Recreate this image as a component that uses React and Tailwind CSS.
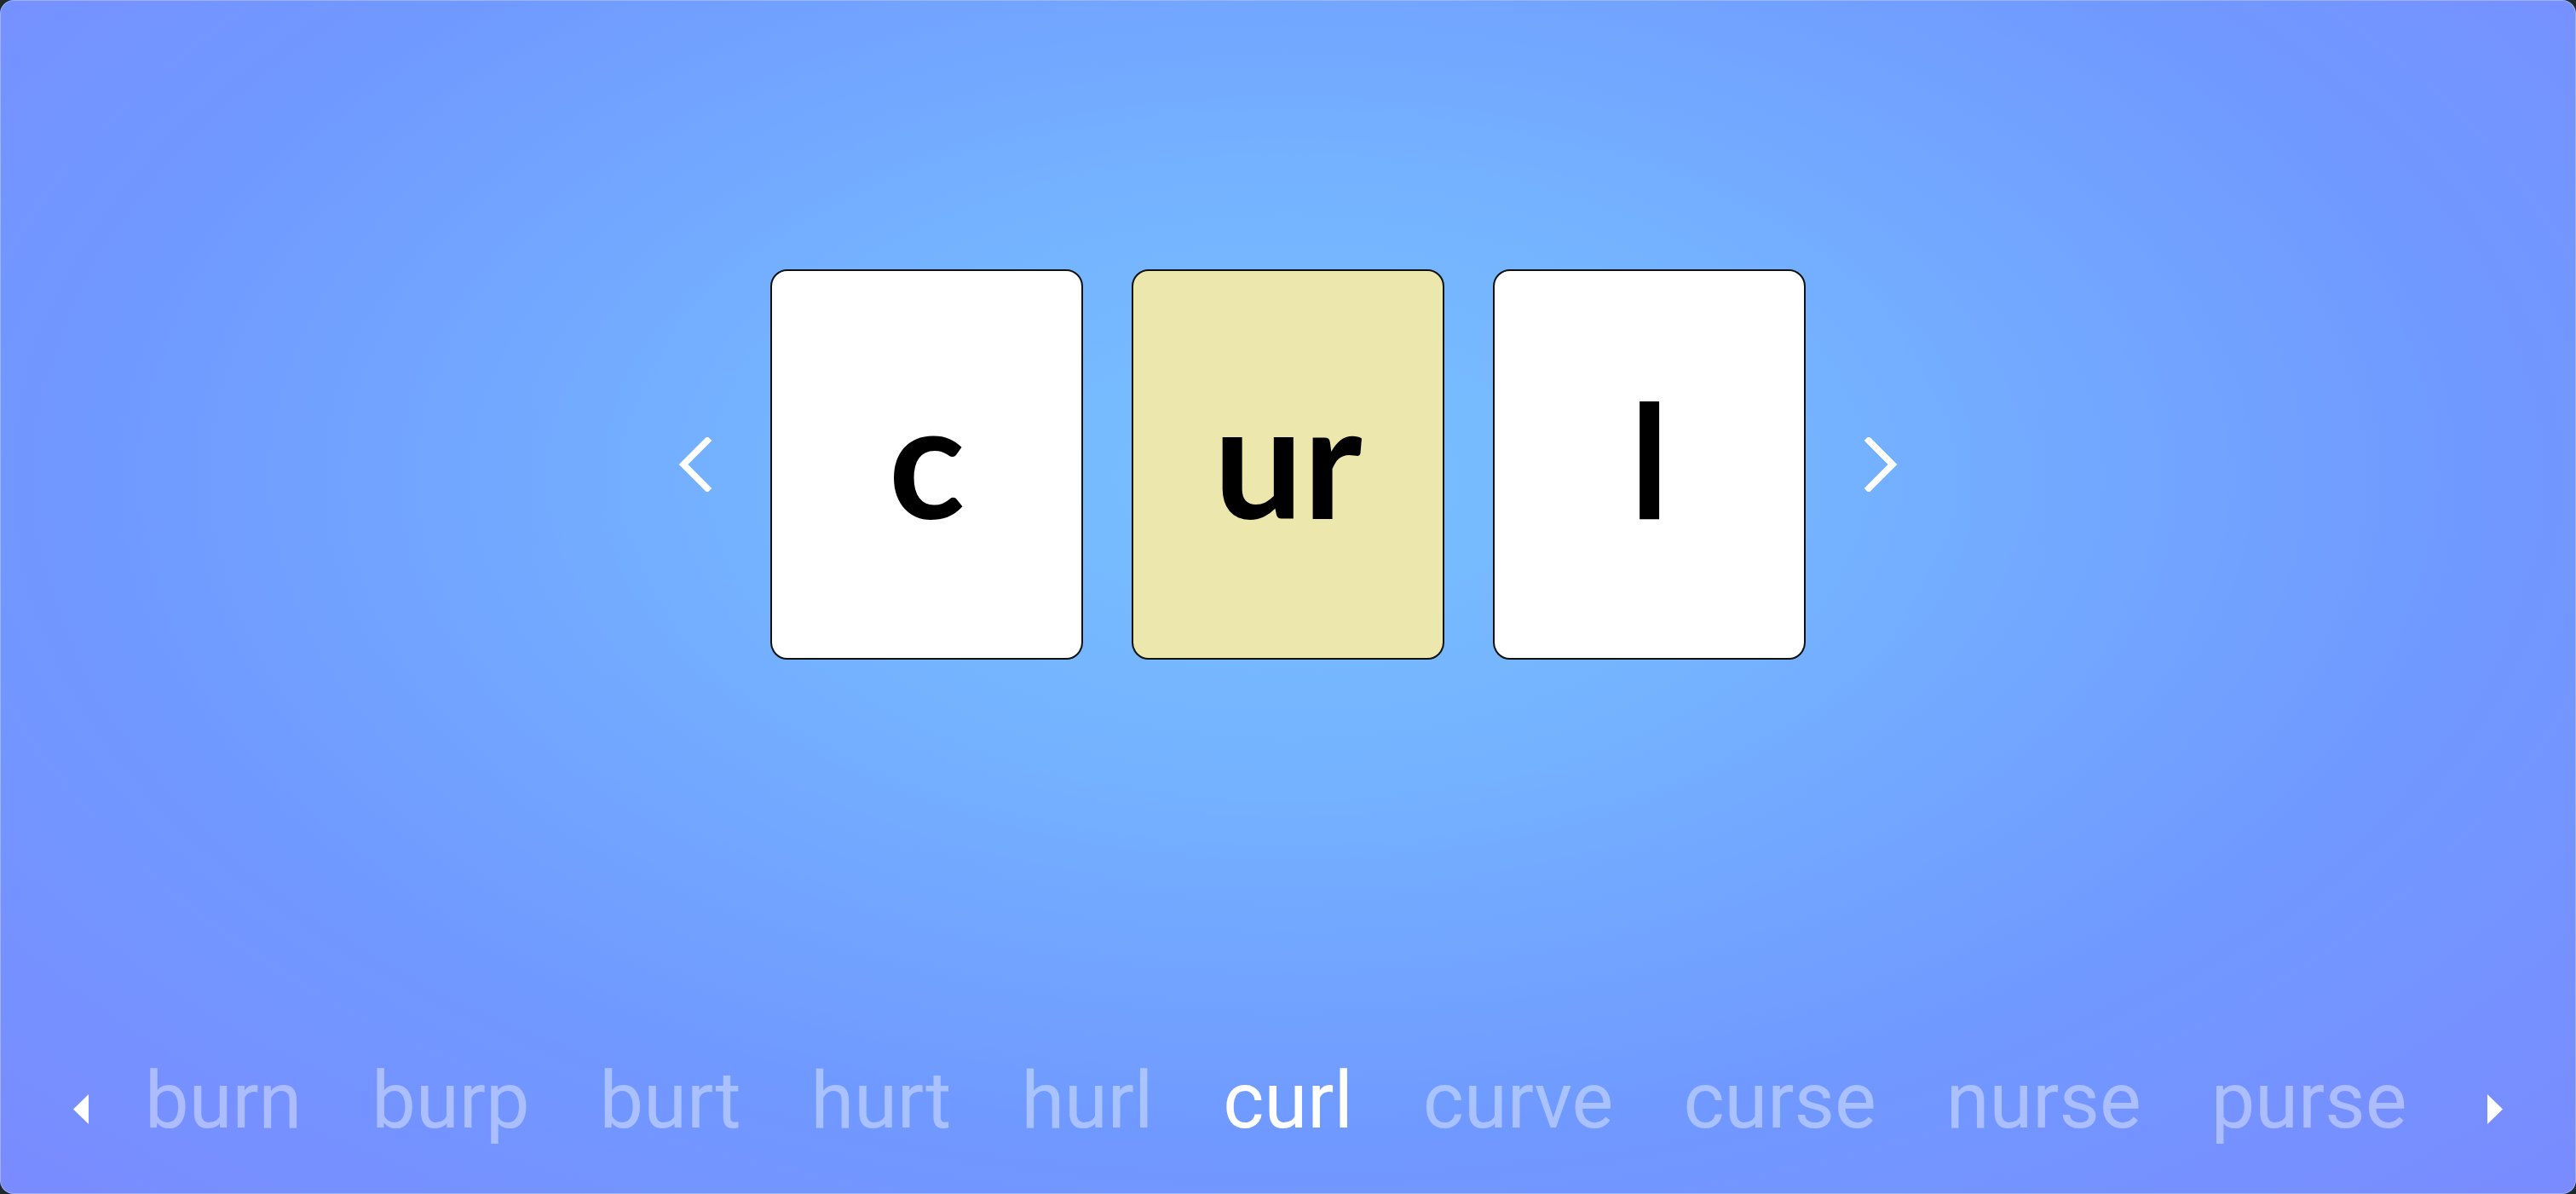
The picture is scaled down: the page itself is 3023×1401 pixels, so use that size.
import React from 'react'

const WORDS = ['burn', 'burp', 'burt', 'hurt', 'hurl', 'curl', 'curve', 'curse', 'nurse', 'purse']
const ACTIVE = 'curl'

const PARTS = [
  { text: 'c', bg: 'bg-white' },
  { text: 'ur', bg: 'bg-[#ece8ad]' },
  { text: 'l', bg: 'bg-white' },
]

function Chevron({ dir }) {
  const pts = dir === 'left' ? '34,4 6,32 34,60' : '6,4 34,32 6,60'
  return (
    <svg width="40" height="64" viewBox="0 0 40 64" className="shrink-0">
      <polyline points={pts} fill="none" stroke="white" strokeWidth="7.5" strokeLinecap="square" />
    </svg>
  )
}

function Tri({ dir }) {
  const pts = dir === 'left' ? '18,0 0,17.5 18,35' : '0,0 18,17.5 0,35'
  return (
    <svg width="18" height="35" viewBox="0 0 18 35" className="shrink-0 mt-[38px] blur-[0.6px]">
      <polygon points={pts} fill="white" />
    </svg>
  )
}

function LetterCard({ text, bg }) {
  return (
    <div className={`w-[367px] h-[458px] rounded-[20px] border-2 border-[#111] flex items-center justify-center pb-[16px] ${bg}`}>
      <span className="text-[186px] leading-none font-bold text-black font-['Lato',sans-serif]">{text}</span>
    </div>
  )
}

export default function App() {
  return (
    <div className="w-[3023px] h-[1401px] bg-[#1f2a2a]">
      <div className="w-full h-full rounded-[16px] border border-white/30 overflow-hidden bg-[radial-gradient(ellipse_at_50%_40%,#78c0fe_0%,#74b2ff_30%,#7099ff_65%,#7a8bff_100%)] font-['Roboto',sans-serif]">
        {/* cartes syllabes */}
        <div className="h-[1088px] flex items-center justify-center">
          <Chevron dir="left" />
          <div className="flex gap-[57px] mx-[68px]">
            {PARTS.map((p, i) => (
              <LetterCard key={i} text={p.text} bg={p.bg} />
            ))}
          </div>
          <Chevron dir="right" />
        </div>

        {/* liste de mots */}
        <div className="pt-[157px] flex items-start pl-[85px]">
          <Tri dir="left" />
          <div className="flex gap-[82px] ml-[66px]">
            {WORDS.map(w => (
              <span
                key={w}
                className={`text-[92px] leading-none ${w === ACTIVE ? 'text-white' : 'text-white/40'}`}>
                {w}
              </span>
            ))}
          </div>
          <div className="ml-[94px]">
            <Tri dir="right" />
          </div>
        </div>
      </div>
    </div>
  )
}
